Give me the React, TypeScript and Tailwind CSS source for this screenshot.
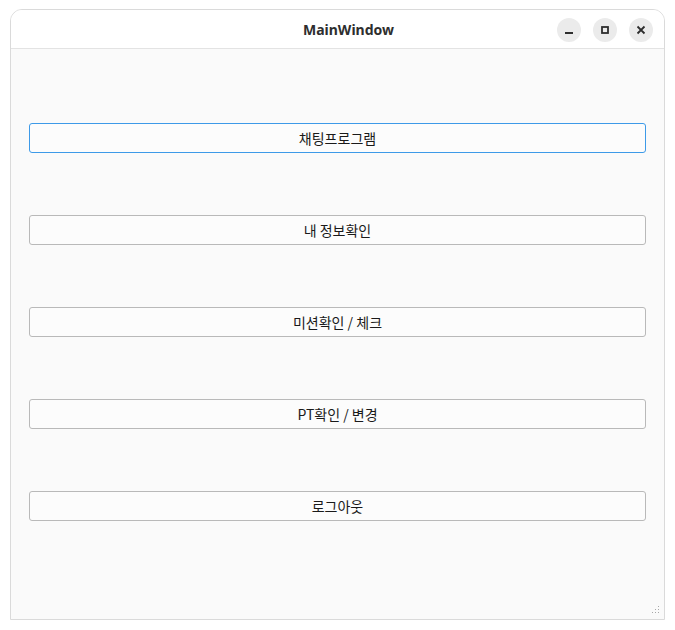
import React from "react";

const buttons = ["채팅프로그램", "내 정보확인", "미션확인 / 체크", "PT확인 / 변경", "로그아웃"];

function Grip() {
  const dots: [number, number][] = [
    [9, 0],
    [6, 3],
    [9, 3],
    [3, 6],
    [6, 6],
    [9, 6],
  ];
  return (
    <svg width="12" height="10" viewBox="0 0 12 10" className="absolute right-[3px] bottom-[3px]">
      {dots.map(([x, y], i) => (
        <rect key={i} x={x} y={y} width="1" height="1" fill="#a8a8a8" />
      ))}
    </svg>
  );
}

export default function App() {
  return (
    <div className="w-[675px] h-[630px] bg-white pt-[9px] pl-[10px] font-['Noto_Sans_CJK_KR','Noto_Sans',sans-serif]">
      <div className="relative w-[655px] h-[611px] rounded-t-[12px] border border-[#dadada] bg-[#fafafa] flex flex-col overflow-hidden">
        <div className="relative h-[39px] shrink-0 border-b border-[#e3e3e3] bg-white flex items-center justify-center pl-[22px]">
          <span className="text-[14px] font-bold text-[#2e2e2e] font-['Noto_Sans',sans-serif]">MainWindow</span>
          <div className="absolute right-[11px] top-[8px] flex gap-[12px]">
            <div className="w-[24px] h-[24px] rounded-full bg-[#ebebeb] flex items-center justify-center">
              <svg width="10" height="10" viewBox="0 0 10 10">
                <rect x="1" y="7" width="8" height="2" fill="#2e2e2e" />
              </svg>
            </div>
            <div className="w-[24px] h-[24px] rounded-full bg-[#ebebeb] flex items-center justify-center">
              <svg width="10" height="10" viewBox="0 0 10 10">
                <rect x="2" y="2" width="6" height="6" fill="none" stroke="#2e2e2e" strokeWidth="1.8" />
              </svg>
            </div>
            <div className="w-[24px] h-[24px] rounded-full bg-[#ebebeb] flex items-center justify-center">
              <svg width="10" height="10" viewBox="0 0 10 10">
                <path d="M1.5 1.5 L8.5 8.5 M8.5 1.5 L1.5 8.5" stroke="#2e2e2e" strokeWidth="1.8" />
              </svg>
            </div>
          </div>
        </div>
        <div className="flex flex-col gap-[62px] px-[18px] pt-[74px]">
          {buttons.map((b, i) => (
            <div
              key={b}
              className={
                "h-[30px] rounded-[3px] border bg-[#fcfcfc] flex items-center justify-center text-[14px] text-[#1a1a1a] " +
                (i === 0 ? "border-[#3d9ae8]" : "border-[#b9b9b9]")
              }
            >
              {b}
            </div>
          ))}
        </div>
        <Grip />
      </div>
    </div>
  );
}
